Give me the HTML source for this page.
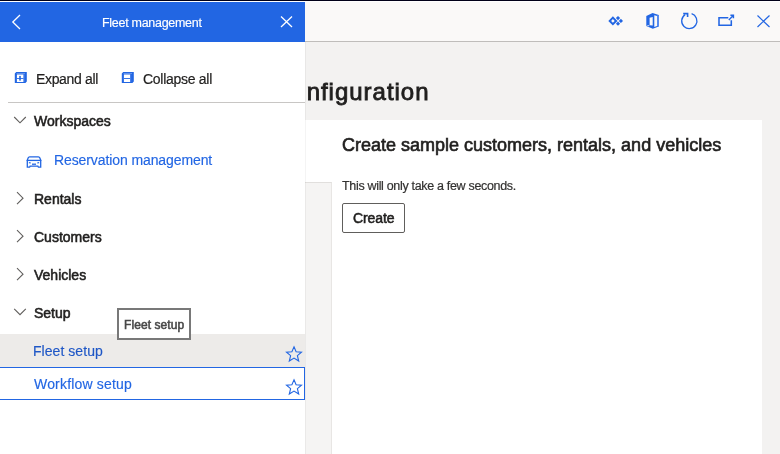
<!DOCTYPE html>
<html><head><meta charset="utf-8">
<style>
*{margin:0;padding:0;box-sizing:border-box}
html,body{width:780px;height:454px;overflow:hidden;background:#f3f2f1;font-family:"Liberation Sans",sans-serif;position:relative}
.a{position:absolute;white-space:nowrap;line-height:1;will-change:transform}
#topline{position:absolute;left:0;top:0;width:780px;height:1px;background:#000018}
#topwhite{position:absolute;left:0;top:1px;width:780px;height:1px;background:#fff}
#bar{position:absolute;left:305px;top:2px;width:475px;height:39px;background:#faf9f8}
#barb{position:absolute;left:305px;top:41px;width:475px;height:1px;background:#bfbdbb}
#card{position:absolute;left:305px;top:120px;width:457px;height:334px;background:#fff}
#strip{position:absolute;left:305px;top:182px;width:27px;height:272px;background:#f5f4f3;border-top:1px solid #e1dfdd;border-right:1px solid #e8e6e4}
#panel{position:absolute;left:0;top:2px;width:305px;height:452px;background:#fff}
#phead{position:absolute;left:0;top:2px;width:305px;height:40px;background:#2266e3}
#shadow{position:absolute;left:305px;top:42px;width:1px;height:412px;background:rgba(0,0,0,0.045)}
.nav{font-size:13px;font-weight:700;color:#201f1e}
.link{color:#2266e3}
</style></head><body>
<div id="topline"></div><div id="topwhite"></div>
<div id="bar"></div><div id="barb"></div>
<div class="a" style="left:273.7px;top:79.68px;font-size:24px;letter-spacing:0.98px;-webkit-text-stroke:0.85px #201f1e;color:#201f1e;">Configuration</div>
<div id="card"></div>
<div id="strip"></div>
<div class="a" style="left:342px;top:135.76px;font-size:18px;-webkit-text-stroke:0.65px #201f1e;color:#201f1e;">Create sample customers, rentals, and vehicles</div>
<div class="a" style="left:342px;top:180.02px;font-size:12.5px;letter-spacing:-0.32px;-webkit-text-stroke:0.2px #323130;color:#323130;">This will only take a few seconds.</div>
<div style="position:absolute;left:342px;top:203px;width:63px;height:30px;border:1px solid #605e5c;border-radius:2px;background:#fff"></div>
<div class="a" style="left:353px;top:211.15px;font-size:14px;letter-spacing:-0.1px;-webkit-text-stroke:0.55px #201f1e;color:#201f1e;">Create</div>

<!-- top bar icons -->
<svg style="position:absolute;left:600px;top:8px" width="180" height="28" viewBox="600 8 180 28">
  <g fill="#2266e3">
    <path d="M612.9 16.3 L617.5 20.9 L612.9 25.5 L608.3 20.9 Z M612.9 19.1 L611.1 20.9 L612.9 22.7 L614.7 20.9 Z" fill-rule="evenodd"/>
    <path d="M618 16 L620.1 18.1 L618 20.2 L615.9 18.1 Z"/>
    <path d="M618 21.6 L620.1 23.7 L618 25.8 L615.9 23.7 Z"/>
    <path d="M620.9 18.8 L623 20.9 L620.9 23 L618.8 20.9 Z"/>
  </g>
  <g fill="#2266e3">
    <path d="M652.6 13 L658.8 14.9 L658.8 26.5 L652.8 28.8 L646.3 26 L646.3 16.1 Z M654.3 15.3 L657.1 16 L657.1 26.1 L654.3 27 Z M649.6 17.8 L652.7 16.9 L652.7 25.4 L649.6 25.3 Z" fill-rule="evenodd"/>
    <rect x="657.1" y="15.3" width="1.7" height="11" fill="#5a8ef0"/>
    <path d="M646.3 25.4 L649.6 25.3 L648.6 26.3 Z" fill="#faf9f8"/>
  </g>
  <g fill="none" stroke="#2266e3" stroke-width="1.4">
    <path d="M691.6 13.7 A7.6 7.6 0 1 1 685.1 14.6" stroke-width="1.3"/>
    <path d="M683.2 13.6 L687.6 13.6 L687.6 17" stroke-width="1.6"/>
    <path d="M728.3 17.7 L719 17.7 L719 25.2 L731.3 25.2 L731.3 20.3" stroke-width="1.55"/>
    <path d="M728.8 20 L733 15.8" stroke-width="1.4"/>
    <path d="M730.4 15.3 L733.4 15.3 L733.4 18.3" stroke-width="1.5"/>
    <path d="M757.5 15.5 L769.5 27 M769.5 15.5 L757.5 27" stroke-width="1.2"/>
  </g>
</svg>

<div id="shadow"></div>
<div id="panel"></div>
<div id="phead"></div>
<svg style="position:absolute;left:0;top:2px" width="305" height="40" viewBox="0 2 305 40">
  <path d="M20 15 L12.8 22 L20 29" fill="none" stroke="#fff" stroke-width="1.3"/>
  <path d="M281 16.5 L292 27 M292 16.5 L281 27" fill="none" stroke="#fff" stroke-width="1.3"/>
</svg>
<div class="a" style="left:102px;top:16.82px;font-size:12.5px;letter-spacing:-0.29px;-webkit-text-stroke:0.15px #fff;color:#fff;">Fleet management</div>

<!-- expand/collapse -->
<svg style="position:absolute;left:0;top:60px" width="305" height="60" viewBox="0 60 305 60">
  <g fill="#2266e3">
    <path d="M14.8 73.4 L16.2 72 L26.8 72 L26.8 81.6 L25.4 83 L14.8 83 Z M16.9 74.6 L16.9 81.9 L23.6 81.9 L23.6 74.6 Z" fill-rule="evenodd"/>
    <rect x="16.9" y="78" width="6.7" height="0.85"/>
    <rect x="19.2" y="75.9" width="1.6" height="4.7"/>
    <rect x="16.6" y="73.1" width="8.4" height="0.7" fill="#7fa6f0"/>
    <rect x="23.6" y="74.2" width="1" height="7.8" fill="#4a80ea"/>
    <path d="M121.8 73.4 L123.2 72 L133.8 72 L133.8 81.6 L132.4 83 L121.8 83 Z M123.9 74.6 L123.9 81.9 L130.2 81.9 L130.2 74.6 Z" fill-rule="evenodd"/>
    <rect x="123.9" y="78" width="6.3" height="0.9"/>
    <rect x="123.6" y="73.1" width="8.4" height="0.7" fill="#7fa6f0"/>
    <rect x="130.2" y="74.2" width="1" height="7.8" fill="#4a80ea"/>
  </g>
  <rect x="8" y="102" width="297" height="1" fill="#c8c6c4"/>
  
</svg>
<div class="a" style="left:36px;top:72.15px;font-size:14px;letter-spacing:-0.34px;-webkit-text-stroke:0.2px #201f1e;color:#201f1e;">Expand all</div>
<div class="a" style="left:143.3px;top:72.15px;font-size:14px;letter-spacing:-0.28px;-webkit-text-stroke:0.2px #201f1e;color:#201f1e;">Collapse all</div>

<div class="a" style="left:34px;top:114.15px;font-size:14px;-webkit-text-stroke:0.55px #201f1e;color:#201f1e;">Workspaces</div>
<svg style="position:absolute;left:20px;top:150px" width="30" height="22" viewBox="20 150 30 22">
  <g fill="none" stroke="#2266e3" stroke-width="1.3">
    <path d="M29.6 156.8 L38.4 156.8 Q39.5 156.8 39.9 158 L40.7 160.4 L40.7 167.2 L38.4 167.2 L37.9 166.2 L30.1 166.2 L29.6 167.2 L27.3 167.2 L27.3 160.4 L28.1 158 Q28.5 156.8 29.6 156.8 Z"/>
    <path d="M26.6 160.4 L41.4 160.4"/>
    <path d="M32 164.2 L36 164.2"/>
  </g>
  <path d="M28.9 162 L30.9 162.6 L30.6 163.4 L28.9 163.2 Z" fill="#2266e3"/>
  <path d="M39.1 162 L37.1 162.6 L37.4 163.4 L39.1 163.2 Z" fill="#2266e3"/>
</svg>
<div class="a" style="left:54px;top:153.15px;font-size:14px;letter-spacing:-0.1px;-webkit-text-stroke:0.15px #2266e3;color:#2266e3;">Reservation management</div>

<svg style="position:absolute;left:0;top:110px" width="40" height="220" viewBox="0 110 40 220">
  <g fill="none" stroke="#605e5c" stroke-width="1.1">
    <path d="M17 192.2 L23 198.2 L17 204.2"/>
    <path d="M17 230.2 L23 236.2 L17 242.2"/>
    <path d="M17 268.2 L23 274.2 L17 280.2"/>
    <path d="M14.2 308.8 L20 314.6 L25.8 308.8"/><path d="M14.2 117 L20 122.8 L25.8 117"/>
  </g>
</svg>
<div class="a" style="left:33.6px;top:192.15px;font-size:14px;-webkit-text-stroke:0.55px #201f1e;color:#201f1e;">Rentals</div>
<div class="a" style="left:33.5px;top:230.15px;font-size:14px;-webkit-text-stroke:0.55px #201f1e;color:#201f1e;">Customers</div>
<div class="a" style="left:34px;top:268.15px;font-size:14px;-webkit-text-stroke:0.55px #201f1e;color:#201f1e;">Vehicles</div>
<div class="a" style="left:33.5px;top:306.15px;font-size:14px;-webkit-text-stroke:0.55px #201f1e;color:#201f1e;">Setup</div>

<div style="position:absolute;left:0;top:334px;width:305px;height:33px;background:#edebe9"></div>
<div style="position:absolute;left:-1px;top:367px;width:306px;height:33px;border:1px solid #2266e3"></div>
<div class="a" style="left:33.3px;top:344.15px;font-size:14px;letter-spacing:0.05px;-webkit-text-stroke:0.15px #1f57c6;color:#1f57c6;">Fleet setup</div>
<div class="a" style="left:34px;top:377.15px;font-size:14px;letter-spacing:0.18px;-webkit-text-stroke:0.15px #2266e3;color:#2266e3;">Workflow setup</div>
<svg style="position:absolute;left:280px;top:340px" width="25" height="60" viewBox="280 340 25 60">
  <g fill="none" stroke="#2266e3" stroke-width="1.1" stroke-linejoin="miter">
    <path d="M294 346.8 L296.1 351.8 L301.5 352.2 L297.4 355.7 L298.7 361 L294 358.1 L289.3 361 L290.6 355.7 L286.5 352.2 L291.9 351.8 Z"/>
    <path d="M294 379.8 L296.1 384.8 L301.5 385.2 L297.4 388.7 L298.7 394 L294 391.1 L289.3 394 L290.6 388.7 L286.5 385.2 L291.9 384.8 Z"/>
  </g>
</svg>

<!-- tooltip -->
<div style="position:absolute;left:117px;top:308px;width:74px;height:32px;border:2px solid #787878;background:#fff"></div>
<div class="a" style="left:123.5px;top:318.84px;font-size:12px;letter-spacing:0.08px;-webkit-text-stroke:0.55px #484848;color:#484848;">Fleet setup</div>
</body></html>
